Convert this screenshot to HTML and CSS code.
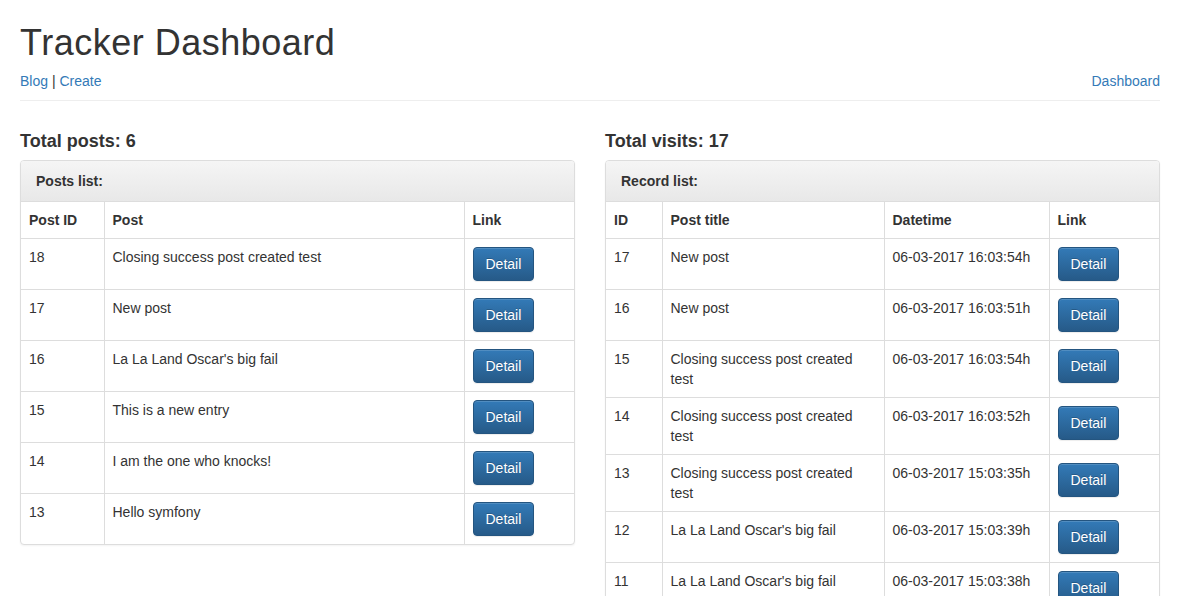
FILE: index.html
```html
<!DOCTYPE html>
<html lang="en">
<head>
<meta charset="utf-8">
<title>Tracker Dashboard</title>
<link rel="stylesheet" href="styles.css">
</head>
<body>
<div class="container">
  <h1 class="title">Tracker Dashboard</h1>
  <div class="topnav">
    <div><a href="#">Blog</a> | <a href="#">Create</a></div>
    <div><a href="#">Dashboard</a></div>
  </div>
  <hr class="rule">
  <div class="row">
    <div class="col">
      <h4 class="total">Total posts: 6</h4>
      <div class="panel">
        <div class="panel-heading"><b>Posts list:</b></div>
        <table class="table">
          <colgroup><col class="w-84"><col class="w-360"><col class="w-111"></colgroup>
          <thead><tr><th>Post ID</th><th>Post</th><th>Link</th></tr></thead>
          <tbody>
            <tr><td>18</td><td>Closing success post created test</td><td><a class="btn" href="#">Detail</a></td></tr>
            <tr><td>17</td><td>New post</td><td><a class="btn" href="#">Detail</a></td></tr>
            <tr><td>16</td><td>La La Land Oscar's big fail</td><td><a class="btn" href="#">Detail</a></td></tr>
            <tr><td>15</td><td>This is a new entry</td><td><a class="btn" href="#">Detail</a></td></tr>
            <tr><td>14</td><td>I am the one who knocks!</td><td><a class="btn" href="#">Detail</a></td></tr>
            <tr><td>13</td><td>Hello symfony</td><td><a class="btn" href="#">Detail</a></td></tr>
          </tbody>
        </table>
      </div>
    </div>
    <div class="col">
      <h4 class="total">Total visits: 17</h4>
      <div class="panel">
        <div class="panel-heading"><b>Record list:</b></div>
        <table class="table">
          <colgroup><col class="w-57"><col class="w-222"><col class="w-165"><col class="w-111"></colgroup>
          <thead><tr><th>ID</th><th>Post title</th><th>Datetime</th><th>Link</th></tr></thead>
          <tbody>
            <tr><td>17</td><td>New post</td><td>06-03-2017 16:03:54h</td><td><a class="btn" href="#">Detail</a></td></tr>
            <tr><td>16</td><td>New post</td><td>06-03-2017 16:03:51h</td><td><a class="btn" href="#">Detail</a></td></tr>
            <tr><td>15</td><td>Closing success post created test</td><td>06-03-2017 16:03:54h</td><td><a class="btn" href="#">Detail</a></td></tr>
            <tr><td>14</td><td>Closing success post created test</td><td>06-03-2017 16:03:52h</td><td><a class="btn" href="#">Detail</a></td></tr>
            <tr><td>13</td><td>Closing success post created test</td><td>06-03-2017 15:03:35h</td><td><a class="btn" href="#">Detail</a></td></tr>
            <tr><td>12</td><td>La La Land Oscar's big fail</td><td>06-03-2017 15:03:39h</td><td><a class="btn" href="#">Detail</a></td></tr>
            <tr><td>11</td><td>La La Land Oscar's big fail</td><td>06-03-2017 15:03:38h</td><td><a class="btn" href="#">Detail</a></td></tr>
          </tbody>
        </table>
      </div>
    </div>
  </div>
</div>
</body>
</html>
```

FILE: styles.css
```css
* { box-sizing: border-box; }
html, body { margin: 0; padding: 0; }
body {
  font-family: "Liberation Sans", Arial, Helvetica, sans-serif;
  font-size: 14px;
  line-height: 20px;
  color: #333;
  background: #fff;
}
a { color: #337ab7; text-decoration: none; }
.container {
  width: 1140px;
  margin-left: 20px;
}
.title {
  font-size: 36px;
  font-weight: 400;
  line-height: 40px;
  letter-spacing: 0.5px;
  margin: 23px 0 8px;
  color: #333;
}
.topnav {
  display: flex;
  justify-content: space-between;
  line-height: 20px;
}
.rule {
  border: 0;
  border-top: 1px solid #eee;
  margin: 9px 0 0;
  height: 0;
}
.row {
  display: flex;
  gap: 30px;
  align-items: flex-start;
}
.col { width: 555px; }
.total {
  font-size: 18px;
  font-weight: 700;
  line-height: 20px;
  margin: 30px 0 9px;
}
.panel {
  border: 1px solid #ddd;
  border-radius: 4px;
  background: #fff;
  box-shadow: 0 1px 2px rgba(0,0,0,.05);
  overflow: hidden;
}
.panel-heading {
  padding: 10px 15px;
  line-height: 20px;
  border-bottom: 1px solid #ddd;
  background-image: linear-gradient(to bottom, #f5f5f5 0, #e8e8e8 100%);
  color: #333;
}
.table {
  width: 100%;
  border-collapse: collapse;
  table-layout: fixed;
}
.w-84 { width: 83px; }
.w-360 { width: 360px; }
.w-111 { width: 111px; }
.w-57 { width: 56px; }
.w-222 { width: 222px; }
.w-165 { width: 165px; }
.table th, .table td {
  padding: 8px;
  line-height: 20px;
  text-align: left;
  vertical-align: top;
  border: 1px solid #ddd;
}
.table th {
  font-weight: 700;
  vertical-align: bottom;
  border-top: 0;
}
.table tr > :first-child { border-left: 0; }
.table tr > :last-child { border-right: 0; }
.table tbody tr:last-child td { border-bottom: 0; }
.btn {
  display: inline-block;
  padding: 6px 12px;
  font-size: 14px;
  line-height: 20px;
  color: #fff;
  border: 1px solid #245580;
  border-radius: 4px;
  background-image: linear-gradient(to bottom, #337ab7 0, #265a88 100%);
  text-shadow: 0 -1px 0 rgba(0,0,0,.2);
  box-shadow: inset 0 1px 0 rgba(255,255,255,.15), 0 1px 1px rgba(0,0,0,.075);
}
```
